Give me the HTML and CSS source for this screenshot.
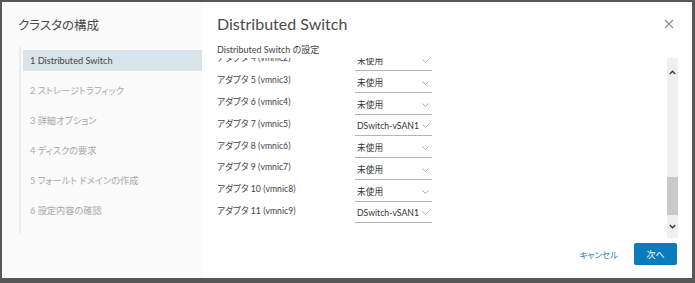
FILE: index.html
```html
<!DOCTYPE html>
<html lang="ja">
<head>
<meta charset="utf-8">
<link rel="stylesheet" href="styles.css">
</head>
<body>
<div class="dialog">
  <aside class="side">
    <div class="side-title">クラスタの構成</div>
    <ol class="steps">
      <li class="step active">1 Distributed Switch</li>
      <li class="step">2 ストレージトラフィック</li>
      <li class="step">3 詳細オプション</li>
      <li class="step">4 ディスクの要求</li>
      <li class="step">5 フォールト ドメインの作成</li>
      <li class="step">6 設定内容の確認</li>
    </ol>
  </aside>
  <main class="main">
    <header class="head">
      <div class="title">Distributed Switch</div>
      <svg class="close" width="10" height="10" viewBox="0 0 10 10"><path d="M1 1L9 9M9 1L1 9" stroke="#8a8a8a" stroke-width="1.1" fill="none"/></svg>
    </header>
    <div class="body">
      <div class="subhead">Distributed Switch の設定</div>
      <div class="scroller">
        <div class="rows">
          <div class="row"><span class="label">アダプタ 4 (vmnic2)</span><span class="select"><span>未使用</span><svg class="chev" width="7" height="4" viewBox="0 0 7 4"><path d="M0.5 0.5L3.5 3.5L6.5 0.5" stroke="#aaa" fill="none"/></svg></span></div>
          <div class="row"><span class="label">アダプタ 5 (vmnic3)</span><span class="select"><span>未使用</span><svg class="chev" width="7" height="4" viewBox="0 0 7 4"><path d="M0.5 0.5L3.5 3.5L6.5 0.5" stroke="#aaa" fill="none"/></svg></span></div>
          <div class="row"><span class="label">アダプタ 6 (vmnic4)</span><span class="select"><span>未使用</span><svg class="chev" width="7" height="4" viewBox="0 0 7 4"><path d="M0.5 0.5L3.5 3.5L6.5 0.5" stroke="#aaa" fill="none"/></svg></span></div>
          <div class="row"><span class="label">アダプタ 7 (vmnic5)</span><span class="select"><span>DSwitch-vSAN1</span><svg class="chev" width="7" height="4" viewBox="0 0 7 4"><path d="M0.5 0.5L3.5 3.5L6.5 0.5" stroke="#aaa" fill="none"/></svg></span></div>
          <div class="row"><span class="label">アダプタ 8 (vmnic6)</span><span class="select"><span>未使用</span><svg class="chev" width="7" height="4" viewBox="0 0 7 4"><path d="M0.5 0.5L3.5 3.5L6.5 0.5" stroke="#aaa" fill="none"/></svg></span></div>
          <div class="row"><span class="label">アダプタ 9 (vmnic7)</span><span class="select"><span>未使用</span><svg class="chev" width="7" height="4" viewBox="0 0 7 4"><path d="M0.5 0.5L3.5 3.5L6.5 0.5" stroke="#aaa" fill="none"/></svg></span></div>
          <div class="row"><span class="label">アダプタ 10 (vmnic8)</span><span class="select"><span>未使用</span><svg class="chev" width="7" height="4" viewBox="0 0 7 4"><path d="M0.5 0.5L3.5 3.5L6.5 0.5" stroke="#aaa" fill="none"/></svg></span></div>
          <div class="row"><span class="label">アダプタ 11 (vmnic9)</span><span class="select"><span>DSwitch-vSAN1</span><svg class="chev" width="7" height="4" viewBox="0 0 7 4"><path d="M0.5 0.5L3.5 3.5L6.5 0.5" stroke="#aaa" fill="none"/></svg></span></div>
        </div>
        <div class="scrollbar">
          <svg class="arrow" width="7" height="5" viewBox="0 0 7 5"><path d="M0.8 4L3.5 1.2L6.2 4" stroke="#333" stroke-width="1.3" fill="none"/></svg>
          <div class="track"><div class="thumb"></div></div>
          <svg class="arrow" width="7" height="5" viewBox="0 0 7 5"><path d="M0.8 1L3.5 3.8L6.2 1" stroke="#333" stroke-width="1.3" fill="none"/></svg>
        </div>
      </div>
    </div>
    <footer class="foot">
      <button class="btn-link">キャンセル</button>
      <button class="btn-primary">次へ</button>
    </footer>
  </main>
</div>
</body>
</html>
```
FILE: styles.css
```css
* { box-sizing: border-box; }
html, body { margin: 0; padding: 0; }
body {
  width: 695px;
  height: 283px;
  background: #585858;
  font-family: "Noto Sans CJK JP", "Noto Sans", sans-serif;
  font-feature-settings: "palt";
  color: #333;
  overflow: hidden;
  padding: 2px 3px 5px 2px;
}
.dialog {
  display: flex;
  width: 690px;
  height: 276px;
  background: #fff;
}
.side {
  width: 200px;
  background: #fafafa;
  padding: 14px 0 0 16px;
}
.side-title {
  font-size: 12.5px;
  line-height: 18px;
  color: #4a4a4a;
  font-weight: 400;
}
.steps {
  list-style: none;
  margin: 13px 0 0 1px;
  padding: 3px 0 12px 2px;
  border-left: 2px solid #ececec;
}
.step {
  height: 21px;
  line-height: 21px;
  margin-bottom: 9px;
  padding-left: 7px;
  font-size: 9.2px;
  color: #a8a8a8;
  font-family: "Lato", "Noto Sans CJK JP", sans-serif;
}
.step:last-child { margin-bottom: 0; }
.step.active {
  background: #d9e4ea;
  color: #444;
}
.main {
  flex: 1;
  display: flex;
  flex-direction: column;
  padding: 0 14px 0 15px;
}
.head {
  display: flex;
  align-items: center;
  justify-content: space-between;
  height: 42px;
  padding-top: 1px;
}
.title {
  font-family: "Lato", "Noto Sans CJK JP", sans-serif;
  font-size: 16px;
  color: #4a4a4a;
}
.close { margin-right: 4px; }
.body { display: flex; flex-direction: column; }
.subhead {
  font-family: "Lato", "Noto Sans CJK JP", sans-serif;
  font-size: 9px;
  line-height: 12px;
  color: #444;
}
.scroller {
  display: flex;
  height: 180px;
  margin-top: 2px;
}
.rows {
  flex: 1;
  overflow: hidden;
}
.row {
  display: flex;
  align-items: center;
  height: 21.8px;
  font-family: "Lato", "Noto Sans CJK JP", sans-serif;
  font-size: 8.7px;
  color: #444;
}
.row:first-child { margin-top: -11px; }
.label { width: 138px; }
.select {
  width: 77px;
  display: flex;
  align-items: center;
  justify-content: space-between;
  padding: 5px 3px 4px 2px;
  border-bottom: 1px solid #b5b5b5;
  margin-top: 6px;
  line-height: 10px;
  color: #333;
}
.scrollbar {
  width: 11px;
  background: #efefef;
  display: flex;
  flex-direction: column;
  align-items: center;
  padding: 12px 0 9px;
}
.track {
  flex: 1;
  width: 100%;
  display: flex;
  flex-direction: column;
  justify-content: flex-end;
  padding: 4px 0 9px;
}
.thumb {
  height: 38px;
  background: #c9c9c9;
}
.foot {
  display: flex;
  justify-content: flex-end;
  align-items: center;
  gap: 16px;
  padding-top: 5px;
  padding-right: 1px;
}
.btn-link {
  background: none;
  border: 0;
  padding: 0;
  font-family: "Noto Sans CJK JP", sans-serif;
  font-feature-settings: "palt";
  font-size: 8.5px;
  color: #1a80b6;
}
.btn-primary {
  width: 43px;
  height: 22px;
  border: 0;
  border-radius: 2px;
  background: #0a7bbd;
  color: #fff;
  font-family: "Noto Sans CJK JP", sans-serif;
  font-size: 9px;
}
```
